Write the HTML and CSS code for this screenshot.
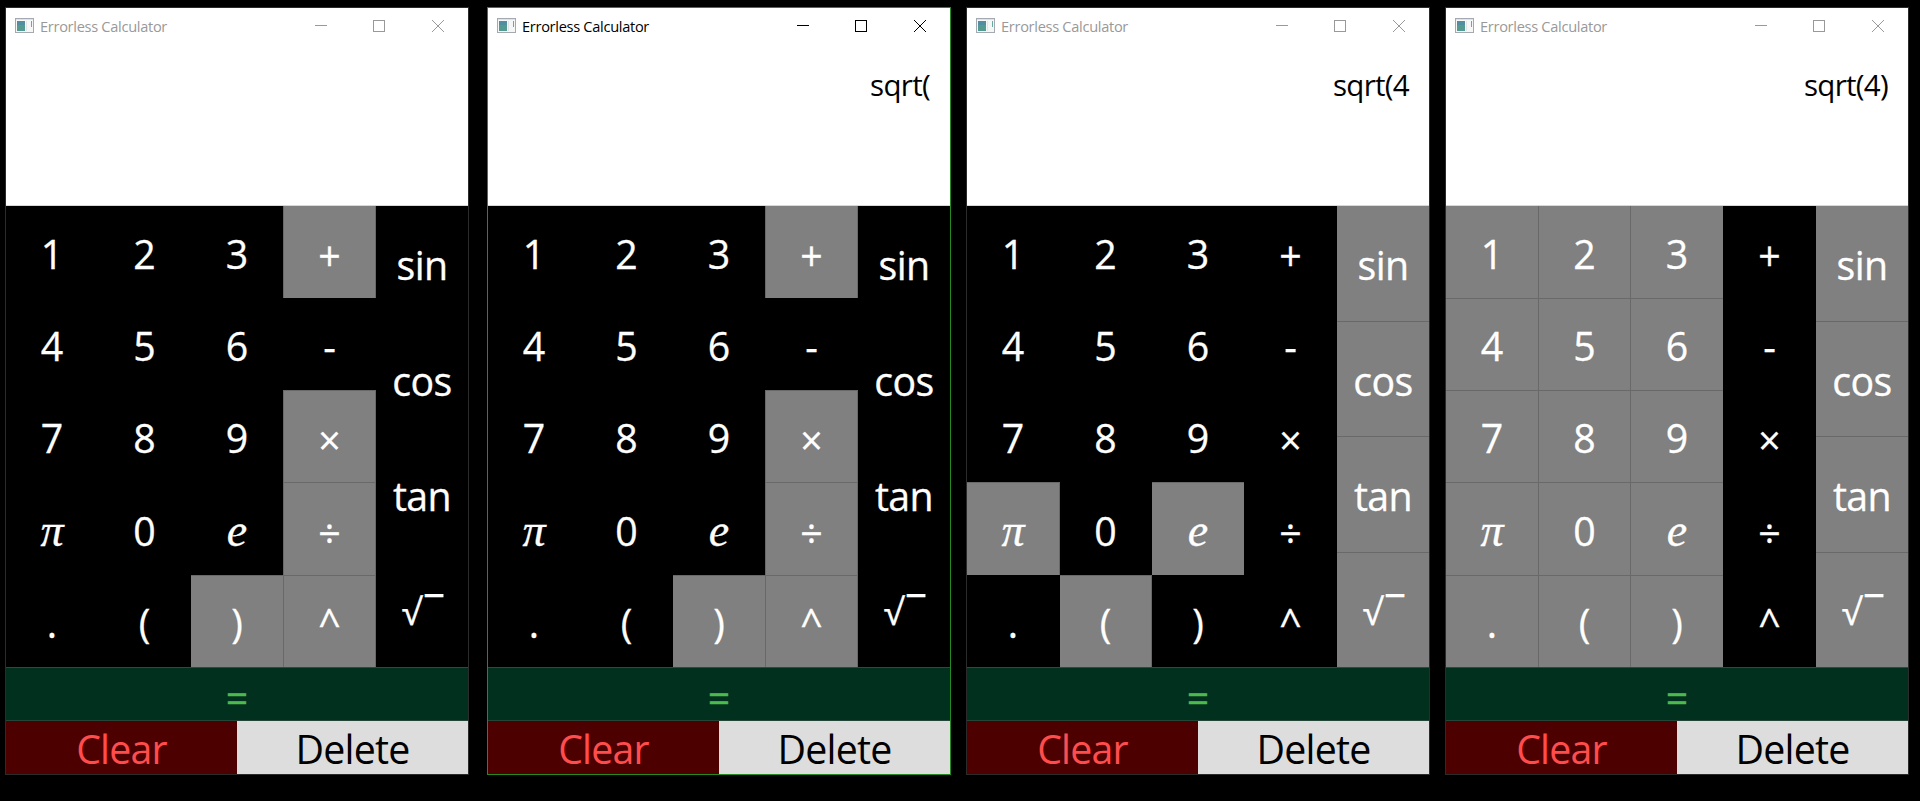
FILE: index.html
```
<!DOCTYPE html>
<html lang="en">
<head>
<meta charset="utf-8">
<title>Errorless Calculator</title>
<link rel="stylesheet" href="styles.css">
</head>
<body>
<main class="desktop" id="desktop"></main>
<script src="app.js"></script>
</body>
</html>
```
FILE: styles.css
```
* { box-sizing: border-box; }
body {
  margin: 0;
  background: #000;
  font-family: "Open Sans", "Noto Sans", sans-serif;
}
.desktop {
  display: flex;
  gap: 15px;
  height: 801px;
  padding: 7px 0 0 5px;
  overflow: hidden;
}
.window {
  display: flex;
  flex-direction: column;
  flex: none;
  width: 464px;
  height: 768px;
  border: 1px solid #2b2b2b;
  color: #999;
}
.window.active { margin-left: 3px; border-color: #228b22; color: #000; }
.titlebar {
  display: flex;
  align-items: center;
  height: 35px;
  padding-left: 9px;
  background: #fff;
}
.app-icon { width: 19px; height: 16px; margin-right: 6px; }
.title { flex: 1; font-size: 14.6px; line-height: 20px; letter-spacing: -0.3px; padding-top: 1px; white-space: nowrap; }
.caption { width: 12px; height: 12px; margin-right: 46px; fill: none; stroke: currentColor; }
.caption.max { margin-right: 47px; }
.caption.close { margin-right: 24px; }
.display {
  height: 163px;
  padding: 21px 20px 0 0;
  background: #fff;
  border-bottom: 1px solid #d4d8d6;
  color: #000;
  font-size: 29.5px;
  line-height: 42px;
  letter-spacing: -0.7px;
  text-align: right;
}
.keypad { display: flex; height: 461px; color: #fff; font-size: 39.3px; -webkit-text-stroke: 0.3px #fff; }
.keys {
  display: grid;
  grid-template-columns: 93px 92px 92px 93px;
  grid-template-rows: 92px 92px 92px 93px 92px;
}
.functions {
  display: grid;
  width: 92px;
  grid-template-rows: 115px 115px 116px 115px;
  letter-spacing: -0.6px;
}
.key {
  display: flex;
  align-items: center;
  justify-content: center;
  padding-top: 3px;
  border: 0 solid transparent;
  line-height: 54px;
}
.key.off { background: #808080; border-color: #696969; }
.key.rule-right { border-right-width: 1px; }
.key.rule-left { border-left-width: 1px; }
.key.rule-top { border-top-width: 1px; }
.math { font-family: "Liberation Serif", serif; font-style: italic; font-size: 46px; }
.operator { padding-top: 4px; }
.radical { font-size: 36px; }
.vinculum { margin-left: 4px; font-weight: 600; font-size: 36px; }
.equals {
  display: flex;
  align-items: center;
  justify-content: center;
  height: 54px;
  padding-top: 7px;
  background: #02301f;
  border-top: 1px solid #33473f;
  border-bottom: 1px solid #244638;
  color: #4dba4d;
  font-size: 39.3px;
  line-height: 44px;
  -webkit-text-stroke: 0.3px #4dba4d;
}
.actions {
  display: grid;
  grid-template-columns: 231px 231px;
  height: 53px;
  font-size: 39.3px;
  letter-spacing: -0.8px;
  line-height: 56px;
  text-align: center;
}
.actions > div { height: 53px; }
.clear { background: #4d0000; color: #ff4d4d; }
.delete { background: #ddd; color: #000; }
```
FILE: app.js
```
const KEYS = ['1', '2', '3', '+', '4', '5', '6', '-', '7', '8', '9', '×', 'π', '0', 'e', '÷', '.', '(', ')', '^'];
const FUNCTIONS = ['sin', 'cos', 'tan', '√'];
const MARKUP = {
  'π': '<span class="math">π</span>',
  'e': '<span class="math">e</span>',
  '+': '<span class="operator">+</span>',
  '×': '<span class="operator">×</span>',
  '÷': '<span class="operator">÷</span>',
  '√': '<span class="radical">√</span><span class="vinculum">¯</span>',
};
const STATES = [
  { text: '', off: ['+', '×', '÷', ')', '^'] },
  { text: 'sqrt(', active: true, off: ['+', '×', '÷', ')', '^'] },
  { text: 'sqrt(4', off: ['π', 'e', '(', ...FUNCTIONS] },
  { text: 'sqrt(4)', off: ['1', '2', '3', '4', '5', '6', '7', '8', '9', 'π', '0', 'e', '.', '(', ')', ...FUNCTIONS] },
];

function key(label, off, rules) {
  const text = MARKUP[label] || `<span>${label}</span>`;
  return `<div class="key ${rules}${off.includes(label) ? ' off' : ''}">${text}</div>`;
}

function gridKey(label, index, off) {
  const column = index % 4;
  const rules = [];
  if (column !== 2) rules.push('rule-right');
  if (column === 3) rules.push('rule-left');
  if (index > 3) rules.push('rule-top');
  return key(label, off, rules.join(' '));
}

function calculator({ text, active, off }) {
  return `<section class="window${active ? ' active' : ''}">
    <header class="titlebar">
      <svg class="app-icon" viewBox="0 0 19 16">
        <rect x=".5" y=".5" width="18" height="14" fill="#f5f6f6" stroke="#a5a9b2"/>
        <path d="M1 1.5h17" stroke="#dde2ea"/>
        <rect x="2" y="3" width="8" height="10" fill="#539b91"/>
        <rect x="2" y="3" width="8" height="4" fill="#528da0"/>
        <path d="M11.5 3v10" stroke="#e2e5e5" /><path d="M16.5 3v6" stroke="#6aa99d"/>
      </svg>
      <span class="title">Errorless Calculator</span>
      <svg class="caption" viewBox="0 0 12 12"><path d="M0 5.5h12"/></svg>
      <svg class="caption max" viewBox="0 0 12 12"><rect x=".5" y=".5" width="11" height="11"/></svg>
      <svg class="caption close" viewBox="0 0 12 12"><path d="M0 0l12 12M12 0L0 12"/></svg>
    </header>
    <div class="display">${text}</div>
    <div class="keypad">
      <div class="keys">${KEYS.map((label, i) => gridKey(label, i, off)).join('')}</div>
      <div class="functions">${FUNCTIONS.map((label, i) => key(label, off, i ? 'rule-top' : '')).join('')}</div>
    </div>
    <div class="equals">=</div>
    <div class="actions"><div class="clear">Clear</div><div class="delete">Delete</div></div>
  </section>`;
}

document.getElementById('desktop').innerHTML = STATES.map(calculator).join('');
```
